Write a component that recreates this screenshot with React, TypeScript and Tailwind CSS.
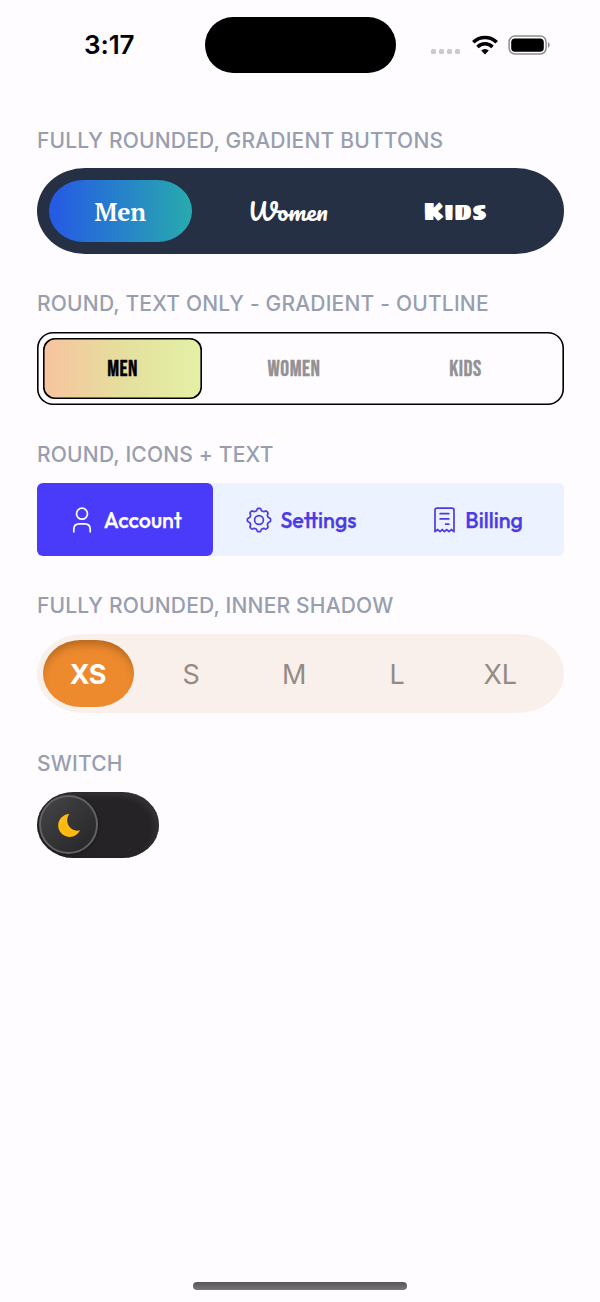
import type { ReactNode } from "react";

function Section({ title, children }: { title: string; children: ReactNode }) {
  return (
    <section>
      <h2 className="mb-4 h-6 whitespace-nowrap pt-[0.5px] text-[21px] font-medium leading-6 tracking-[0.19px] text-[#979fae]">
        {title}
      </h2>
      {children}
    </section>
  );
}

function StatusBar() {
  return (
    <header className="flex h-[91px] items-start pl-[84px] pt-[17px]">
      <div className="flex h-[54px] w-[120.5px] items-center text-[26px] font-semibold tracking-[-0.1px] text-black">3:17</div>
      <div className="h-[56px] w-[191.5px] rounded-full bg-black" />
      <div className="flex h-14 items-center pl-[34.5px]">
        <div className="mt-[13px] flex gap-[3px]">
          {[0, 1, 2, 3].map((n) => (
            <span key={n} className="size-[5.2px] rounded-[1.5px] bg-[#cbc9cd]" />
          ))}
        </div>
        <svg className="-mt-px ml-[11.5px]" width="26" height="20" viewBox="0 0 26 20" fill="none" stroke="#000" strokeWidth="3.5">
          <path d="M1.3 7.2 A16.6 16.6 0 0 1 24.7 7.2" />
          <path d="M5.5 11.9 A10.6 10.6 0 0 1 20.5 11.9" />
          <path d="M9.2 15.6 A5.4 5.4 0 0 1 16.8 15.6 L13 19.4 Z" fill="#000" stroke="none" />
        </svg>
        <svg className="-mt-px ml-[10.6px]" width="43" height="20" viewBox="0 0 43 20">
          <rect x="1.1" y="1.1" width="37" height="17.8" rx="5.8" fill="none" stroke="#8d8c8f" strokeWidth="1.5" />
          <rect x="3.2" y="3.4" width="32.6" height="13.4" rx="3.8" fill="#000" />
          <path d="M40 7.3 C42.2 8 42.2 12 40 12.7 Z" fill="#8d8c8f" />
        </svg>
      </div>
    </header>
  );
}

function AccountIcon() {
  return (
    <svg width="20" height="26" viewBox="0 0 20 26" fill="none" stroke="currentColor" strokeWidth="1.7" strokeLinecap="round">
      <circle cx="10" cy="6.7" r="5.5" />
      <path d="M1.8 24.8V22.4C1.8 18.8 4 16.9 7.3 16.9H12.7C16 16.9 18.2 18.8 18.2 22.4V24.8" />
    </svg>
  );
}

const gearPath =
  Array.from({ length: 96 }, (_, i) => {
    const a = (i / 96) * Math.PI * 2;
    const r = 10.55 + 1.1 * Math.tanh(2.2 * Math.cos(8 * a));
    return `${i ? "L" : "M"}${(13 + r * Math.sin(a)).toFixed(2)} ${(13 - r * Math.cos(a)).toFixed(2)}`;
  }).join("") + "Z";

function SettingsIcon() {
  return (
    <svg width="26" height="26" viewBox="0 0 26 26" fill="none" stroke="currentColor" strokeWidth="1.7" strokeLinejoin="round">
      <path d={gearPath} />
      <circle cx="13" cy="13" r="4.4" />
    </svg>
  );
}

function BillingIcon() {
  return (
    <svg width="21" height="26" viewBox="0 0 21 26" fill="none" stroke="currentColor" strokeWidth="1.7" strokeLinecap="round" strokeLinejoin="round">
      <path d="M1 24.7V3.2Q1 1.2 3 1.2H18Q20 1.2 20 3.2V24.7L17.3 22.5L15 24.7L12.7 22.5L10.5 24.7L8.3 22.5L6 24.7L3.7 22.5Z" />
      <path d="M6.2 6.7H14.8M6.2 11.9H14.8M11.6 17.1H14.8" />
    </svg>
  );
}

const tab = "flex items-center justify-center whitespace-nowrap";

export default function App() {
  return (
    <div className="flex h-[1302px] w-[600px] flex-col overflow-hidden bg-[#fefcff] font-['Inter',sans-serif]">
      <StatusBar />
      <main className="flex flex-1 flex-col gap-[38px] pl-[37px] pr-[36px] pt-[37px]">
        <Section title="FULLY ROUNDED, GRADIENT BUTTONS">
          <div className="flex h-[85.5px] gap-6 rounded-[48px/42.75px] bg-[#253044] py-3 pl-[11.5px] text-white">
            <button className={`${tab} w-[143.5px] rounded-[35px/30.75px] bg-linear-to-r/srgb from-[#2559e5] to-[#28aaae] pt-[3px]`}>
              <span className="font-['PT_Serif','Noto_Serif',serif] text-[24.5px] font-bold">Men</span>
            </button>
            <button className={`${tab} w-[143.5px]`}>
              <span className="font-['Pacifico','Liberation_Serif',cursive] text-[24.3px]">Women</span>
            </button>
            <button className={`${tab} w-[143.5px] pt-0.5`}>
              <span className="font-['Sigmar_One','Inter',sans-serif] text-[24px]">Kids</span>
            </button>
          </div>
        </Section>

        <Section title="ROUND, TEXT ONLY - GRADIENT - OUTLINE">
          <div className="flex h-[73px] gap-[12.5px] rounded-[16px] py-1.5 pl-1.5 font-['Bebas_Neue','Inter',sans-serif] text-[22px] tracking-[0.5px] text-[#929193] shadow-[inset_0_0_0_1.6px_#000] [-webkit-text-stroke:0.4px_currentColor]">
            <button className={`${tab} w-[159px] rounded-[12px] bg-linear-to-r/srgb from-[#f8c3a0] via-[#e5df9d] to-[#e4f1a5] text-black shadow-[inset_0_0_0_1.6px_#000]`}>
              <span className="pt-0.5">MEN</span>
            </button>
            <button className={`${tab} w-[159px]`}>
              <span className="pt-0.5">WOMEN</span>
            </button>
            <button className={`${tab} w-[159px]`}>
              <span className="pt-0.5">KIDS</span>
            </button>
          </div>
        </Section>

        <Section title="ROUND, ICONS + TEXT">
          <div className="grid h-[73px] grid-cols-3 rounded-md bg-[#ecf2ff] font-['Outfit','Lato',sans-serif] text-[21.5px] font-medium text-[#4b3be5] [-webkit-text-stroke:0.25px_currentColor]">
            <button className={`${tab} gap-3 rounded-md bg-[#4a3bfb] pl-1 pt-0.5 text-white`}>
              <AccountIcon />
              <span>Account</span>
            </button>
            <button className={`${tab} gap-2 pl-0.5 pt-0.5`}>
              <SettingsIcon />
              <span>Settings</span>
            </button>
            <button className={`${tab} gap-2.5 pl-[5px] pt-0.5`}>
              <BillingIcon />
              <span>Billing</span>
            </button>
          </div>
        </Section>

        <Section title="FULLY ROUNDED, INNER SHADOW">
          <div className="mt-[16.5px] flex h-[79px] gap-[12.5px] rounded-[46px/39.5px] bg-[#f9f0ec] p-1.5 text-[27px] text-[#938b84]">
            <button className={`${tab} w-[90.5px] rounded-[38px/33.5px] bg-[#ed8a2e] pr-px pt-[3px] font-bold tracking-[-0.6px] text-white shadow-[inset_0_8px_10px_-4px_rgba(100,55,10,0.45)]`}>
              XS
            </button>
            {["S", "M", "L", "XL"].map((size) => (
              <button key={size} className={`${tab} w-[90.5px] pt-[3px]`}>
                {size}
              </button>
            ))}
          </div>
        </Section>

        <Section title="SWITCH">
          <button className="mt-[16.5px] flex h-[66.5px] w-[122px] items-center rounded-[37px/33.25px] bg-[#252326] pl-[2px] shadow-[inset_-3px_3px_7px_rgba(95,95,98,0.3),inset_0_0_2px_#111]">
            <span className="flex size-[59px] items-center justify-center rounded-full border-2 border-[#626164] bg-linear-to-br from-[#454447] to-[#252426] shadow-[1px_1px_3px_rgba(0,0,0,0.3)]">
              <svg width="24" height="24" viewBox="0 0 24 24" fill="#ffb910">
                <path d="M12.2 1C8.7 6.3 10 12.1 14.2 15.5C16.8 17.5 20.1 18.2 23 17.2C21 21.3 17 24 12.2 23.9C6 23.6 1.2 18.6 1.2 12.5C1.2 6.3 6 1.3 12.2 1Z" />
              </svg>
            </span>
          </button>
        </Section>
      </main>
      <footer className="flex h-5 justify-center">
        <div className="h-[7.5px] w-[214px] rounded-full bg-linear-to-b from-[#555457] to-[#777679]" />
      </footer>
    </div>
  );
}
